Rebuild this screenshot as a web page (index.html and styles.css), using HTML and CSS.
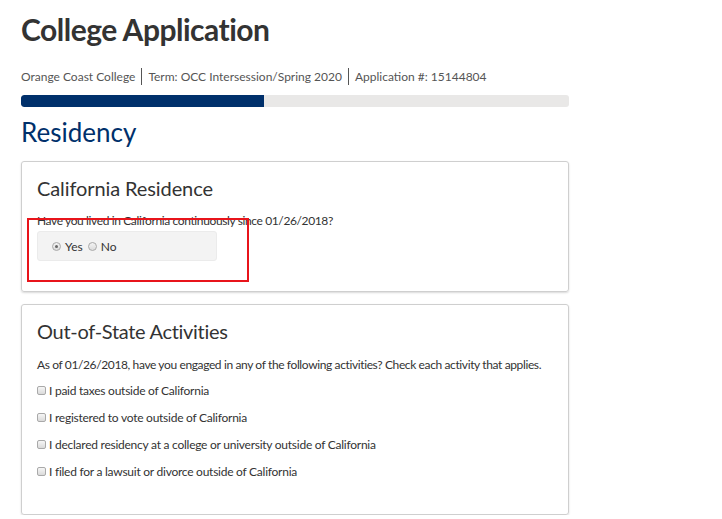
FILE: index.html
```html
<!DOCTYPE html>
<html>
<head>
<meta charset="utf-8">
<link rel="stylesheet" href="styles.css">
</head>
<body>
<div class="page">
  <h1 class="title">College Application</h1>
  <div class="info">
    <span>Orange Coast College</span><span class="sep"></span><span>Term: OCC Intersession/Spring 2020</span><span class="sep"></span><span>Application #: 15144804</span>
  </div>
  <div class="progress"><div class="progress-fill" style="width:44.3%"></div></div>
  <h2 class="section">Residency</h2>

  <div class="card card-res">
    <h3 class="card-title">California Residence</h3>
    <p class="question">Have you lived in California continuously since 01/26/2018?</p>
    <div class="radio-box">
      <label class="opt"><span class="radio checked"></span>Yes</label>
      <label class="opt"><span class="radio"></span>No</label>
    </div>
    <div class="highlight"></div>
  </div>

  <div class="card card-act">
    <h3 class="card-title">Out-of-State Activities</h3>
    <p class="question">As of 01/26/2018, have you engaged in any of the following activities? Check each activity that applies.</p>
    <ul class="checks">
      <li><span class="check"></span>I paid taxes outside of California</li>
      <li><span class="check"></span>I registered to vote outside of California</li>
      <li><span class="check"></span>I declared residency at a college or university outside of California</li>
      <li><span class="check"></span>I filed for a lawsuit or divorce outside of California</li>
    </ul>
  </div>
</div>
</body>
</html>
```

FILE: styles.css
```css
* { box-sizing: border-box; }
html, body { margin: 0; padding: 0; background: #fff; }
body { font-family: "Lato", "Liberation Sans", sans-serif; color: #333; }
.page { width: 569px; padding-left: 21px; padding-top: 10px; }
.title { font-size: 30px; font-weight: 700; line-height: 38px; margin: 0; color: #333; letter-spacing: -0.5px; }
.info { display: flex; align-items: center; font-size: 12px; color: #555; margin-top: 19px; height: 18px; }
.sep { display: inline-block; width: 1px; height: 17px; background: #555; margin: 0 6px; }
.progress { margin-top: 10px; height: 12px; background: #e9e8e7; border-radius: 3px; overflow: hidden; }
.progress-fill { height: 100%; background: #00306b; border-radius: 3px 0 0 3px; }
.section { font-size: 26px; font-weight: 400; color: #00306b; margin: 0; line-height: 32px; margin-top: 9px; }
.card { position: relative; border: 1px solid #cfcfcf; border-radius: 3px; box-shadow: 0 1px 2px rgba(0,0,0,0.15); padding: 12px 15px 0 15px; }
.card-res { margin-top: 13px; height: 131px; }
.card-act { margin-top: 12px; height: 211px; }
.card-title { font-size: 20px; font-weight: 400; margin: 0; line-height: 28px; color: #333; letter-spacing: -0.1px; }
.card-act .card-title { letter-spacing: -0.3px; }
.question { font-size: 12px; margin: 0; line-height: 16px; letter-spacing: -0.38px; white-space: nowrap; }
.card-res .question { margin-top: 11px; }
.card-act .question { margin-top: 12px; }
.radio-box { margin-top: 2px; width: 180px; height: 30px; background: #f3f3f3; border: 1px solid #ebebeb; border-radius: 3px; display: flex; align-items: center; padding-left: 14px; gap: 5px; }
.opt { display: flex; align-items: center; font-size: 12px; color: #333; }
.radio { width: 9px; height: 9px; border-radius: 50%; border: 1px solid #a9a9a9; background: linear-gradient(#f3f3f3, #dcdcdc); margin-right: 4px; position: relative; }
.radio.checked::after { content: ""; position: absolute; left: 2px; top: 2px; width: 3px; height: 3px; border-radius: 50%; background: #666; }
.highlight { position: absolute; left: 5px; top: 56px; width: 222px; height: 64px; border: 2px solid #e8141b; }
.checks { list-style: none; margin: 4px 0 0 0; padding: 0; }
.checks li { display: flex; align-items: center; font-size: 12px; height: 27px; letter-spacing: -0.25px; }
.check { width: 9px; height: 9px; border: 1px solid #a9a9a9; border-radius: 2px; background: linear-gradient(#f6f6f6, #dadada); margin-right: 3px; }
```
